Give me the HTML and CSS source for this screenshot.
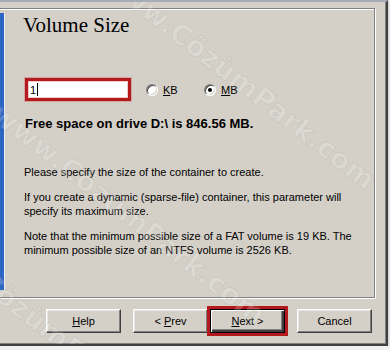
FILE: index.html
```html
<!DOCTYPE html>
<html lang="en">
<head>
  <meta charset="UTF-8">
  <title>Volume Size</title>
  <link rel="stylesheet" href="styles.css">
</head>
<body>
  <div class="window">
    <div class="panel">
      <div class="side"></div>
      <div class="content">
        <h1 class="title">Volume Size</h1>

        <div class="size-row">
          <div class="size-box"><span class="size-value">1</span><span class="caret"></span></div>
          <label class="radio-opt"><span class="radio"></span><span><u>K</u>B</span></label>
          <label class="radio-opt"><span class="radio checked"></span><span><u>M</u>B</span></label>
        </div>

        <p class="free-space">Free space on drive D:\ is 846.56 MB.</p>

        <div class="info">
          <p>Please specify the size of the container to create.</p>
          <p>If you create a dynamic (sparse-file) container, this parameter will<br>specify its maximum size.</p>
          <p>Note that the minimum possible size of a FAT volume is 19 KB. The<br>minimum possible size of an NTFS volume is 2526 KB.</p>
        </div>
      </div>
    </div>

    <div class="buttons">
      <button class="btn"><u>H</u>elp</button>
      <button class="btn btn-prev">&lt; <u>P</u>rev</button>
      <button class="btn btn-next"><u>N</u>ext &gt;</button>
      <button class="btn btn-cancel">Cancel</button>
    </div>

    <div class="watermark wm-1">www.CözümPark.com</div>
    <div class="watermark wm-2">www.CözümPark.com</div>
    <div class="watermark wm-3">www.CözümPark.com</div>
  </div>
</body>
</html>
```

FILE: styles.css
```css
* {
  margin: 0;
  padding: 0;
  box-sizing: border-box;
}
body {
  background: #f1f1f1;
  font-family: 'Liberation Sans', Arial, sans-serif;
  font-size: 11px;
  color: #000;
  overflow: hidden;
}
.window {
  position: relative;
  width: 388px;
  height: 346px;
  background: #d4d0c8;
  border-top: 2px solid #a6acb6;
  border-right: 2px solid #404040;
  border-bottom: 2px solid #404040;
  box-shadow: inset -1px -1px 0 #808080, 1px 1px 2px rgba(0,0,0,0.15);
  overflow: hidden;
}
.panel {
  display: flex;
  width: 375px;
  height: 290px;
  margin-top: 6px;
  border-top: 1px solid #808080;
  border-right: 1px solid #808080;
  border-bottom: 1px solid #808080;
  box-shadow: inset 0 1px 0 #fff, 1px 1px 0 #fff;
}
.side {
  width: 5px;
  margin: 4px 0 7px;
  background: #2d66c2;
  border-right: 1px solid #e9edf5;
}
.content {
  flex: 1;
  padding: 4px 0 0 18px;
}
.title {
  font-family: 'Liberation Serif', 'Times New Roman', serif;
  font-size: 21px;
  font-weight: normal;
  line-height: 24px;
}
.size-row {
  display: flex;
  align-items: center;
  height: 23px;
  margin-top: 41px;
}
.size-box {
  display: flex;
  align-items: center;
  width: 106px;
  height: 23px;
  margin-left: 2px;
  padding-left: 2px;
  background: #fff;
  border: 3px solid #b31a1d;
  box-shadow: 0 0 0 1px rgba(214, 110, 110, 0.45), inset 0 0 0 1px rgba(214, 110, 110, 0.35);
}
.caret {
  width: 1px;
  height: 13px;
  margin-left: 1px;
  background: #000;
}
.radio-opt {
  display: flex;
  align-items: center;
  gap: 5px;
  width: 58px;
}
.radio-opt:first-of-type {
  margin-left: 15px;
}
.radio {
  position: relative;
  width: 12px;
  height: 12px;
  border-radius: 50%;
  background: #fff;
  border: 1px solid;
  border-color: #808080 #fff #fff #808080;
  box-shadow: inset 1px 1px 0 #404040, inset -1px -1px 0 #d4d0c8;
}
.radio.checked::after {
  content: '';
  position: absolute;
  left: 3px;
  top: 3px;
  width: 4px;
  height: 4px;
  border-radius: 50%;
  background: #000;
}
.free-space {
  margin-top: 15px;
  margin-left: 2px;
  font-size: 13px;
  font-weight: bold;
  line-height: 15px;
}
.info {
  margin-top: 34px;
  margin-left: 1px;
  line-height: 14px;
  white-space: nowrap;
}
.info p {
  margin-bottom: 11px;
}
.buttons {
  display: flex;
  gap: 12px;
  margin-top: 11px;
  padding-left: 46px;
}
.btn {
  width: 75px;
  height: 24px;
  font-family: 'Liberation Sans', Arial, sans-serif;
  font-size: 11px;
  color: #000;
  background: #d4d0c8;
  border: 1px solid;
  border-color: #fff #404040 #404040 #fff;
  box-shadow: inset -1px -1px 0 #808080, inset 1px 1px 0 #e8e6e2;
}
.btn-next {
  margin-left: -10px;
  border: 1px solid #000;
  box-shadow: inset 1px 1px 0 #fff, inset -2px -2px 0 #404040, inset -3px -3px 0 #808080;
  outline: 3px solid #b31a1d;
}
.watermark {
  position: absolute;
  font-family: 'DejaVu Sans', sans-serif;
  font-size: 28px;
  font-weight: bold;
  color: rgba(255, 255, 255, 0.2);
  -webkit-text-stroke: 1px rgba(150, 145, 140, 0.18);
  transform: rotate(38deg);
  transform-origin: left top;
  white-space: nowrap;
  pointer-events: none;
}
.wm-1 {
  left: 115px;
  top: -40px;
}
.wm-2 {
  left: 5px;
  top: 95px;
}
.wm-3 {
  left: -75px;
  top: 210px;
}
```
